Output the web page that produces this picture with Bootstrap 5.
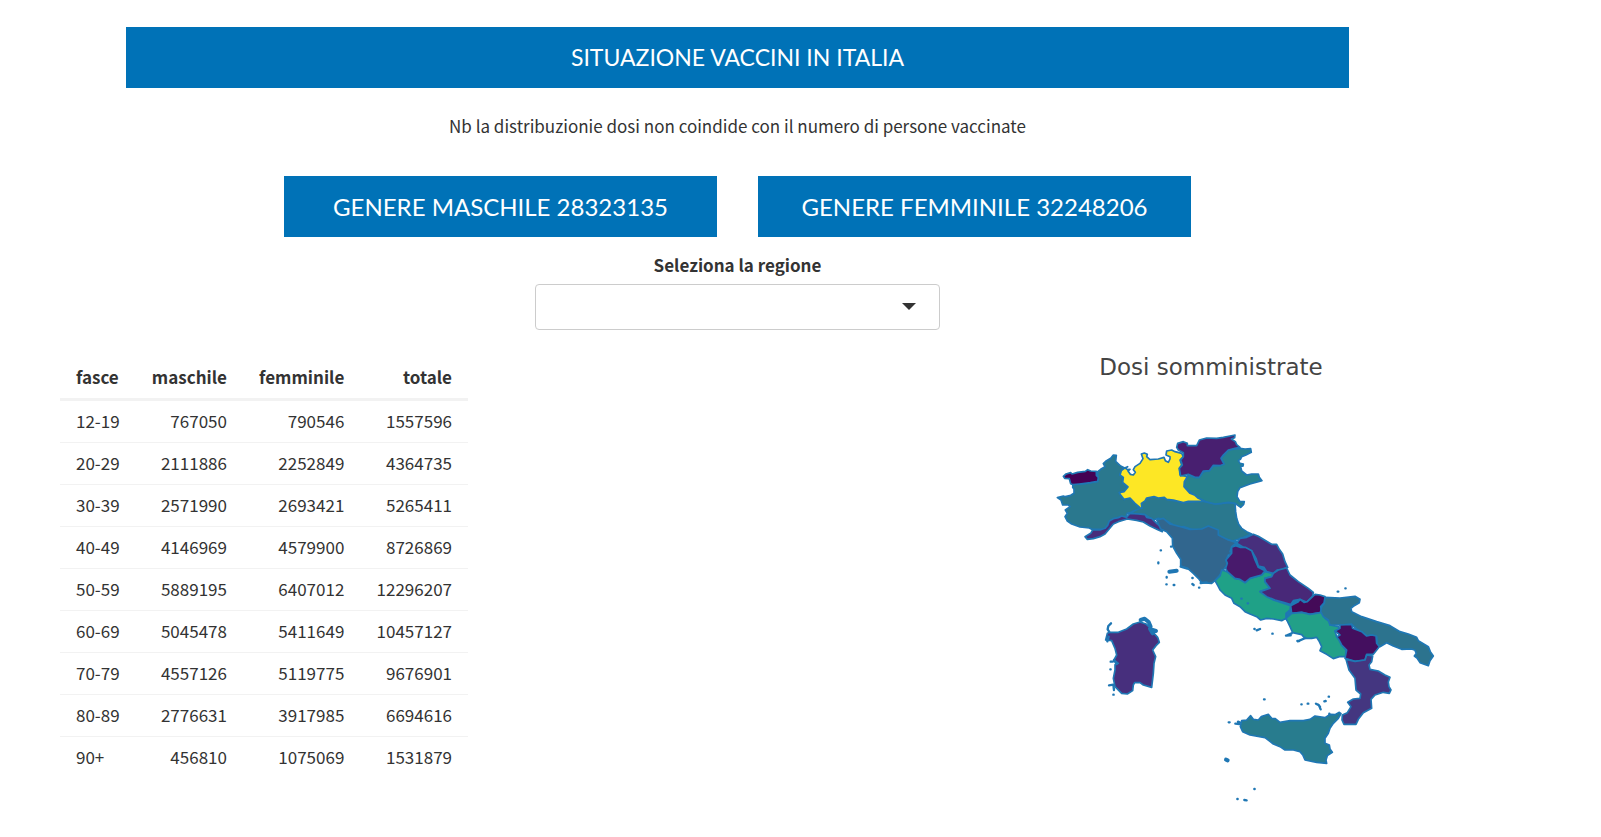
<!DOCTYPE html>
<html lang="it">
<head>
<meta charset="utf-8">
<meta name="viewport" content="width=device-width, initial-scale=1">
<title>Situazione vaccini in Italia</title>
<link href="https://cdn.jsdelivr.net/npm/bootstrap@5.3.0/dist/css/bootstrap.min.css" rel="stylesheet">
<style>
  body { font-family: "Noto Sans CJK SC", "Open Sans", sans-serif; font-size: 17px; line-height: 24px; color: #333; background: #fff; }
  .page-wrap { padding: 27px 126px 24px 0; }
  .top-area { padding: 0 126px; }
  .banner { background: #0072b7; color: #fff; font-family: Lato, sans-serif; font-size: 23px; line-height: 29px; padding: 16px; margin: 0; font-weight: 400; text-align: center; }
  .banner-count { font-size: 24px; flex: 0 1 433px; }
  .note { margin: 26px 0 38px; }
  .counts { gap: 41px; }
  .region-label { font-weight: 700; margin: 16px 0 7px; }
  .region-select { width: 405px; max-width: 100%; height: 46px; border: 1px solid #ccc; border-radius: 4px; color: #333;
    background-image: url("data:image/svg+xml,%3Csvg xmlns='http://www.w3.org/2000/svg' viewBox='0 0 14 7'%3E%3Cpath d='M0 0h14L7 7z' fill='%23333'/%3E%3C/svg%3E");
    background-size: 14px 7px; background-position: right 23px top 18px; }
  .lower { padding: 20px 25px 0 60px; }
  .ages { width: 408px; margin: 0; color: #333; white-space: nowrap; --bs-table-color: #333; }
  .ages th, .ages td { padding: 8px 16px 9px; border-bottom: 1px solid #f2f2f2; text-align: right; line-height: 24px; }
  .ages th:first-child, .ages td:first-child { text-align: left; }
  .ages thead th { border-bottom: 3px solid #f2f2f2; padding: 15px 16px 9px; }
  .ages tbody tr:last-child td { border-bottom: 0; }
  .map-box { flex: 0 1 478px; }
  .map-title { font-family: "DejaVu Sans", sans-serif; font-size: 23px; line-height: 28px; color: #444; margin: 3px 0 44px; text-align: center; }
  .regions path { stroke: #1f77b4; stroke-width: 5; stroke-linejoin: round; }
  .regions .isles path { fill: none; stroke-width: 7; stroke-linecap: round; }
  .regions .isles .wide { stroke-width: 12; }
</style>
</head>
<body>
<main class="page-wrap">
  <div class="top-area text-center">
    <h1 class="banner">SITUAZIONE VACCINI IN ITALIA</h1>
    <p class="note">Nb la distribuzionie dosi non coindide con il numero di persone vaccinate</p>
    <div class="counts d-flex justify-content-center">
      <h2 class="banner banner-count">GENERE MASCHILE 28323135</h2>
      <h2 class="banner banner-count">GENERE FEMMINILE 32248206</h2>
    </div>
    <label class="region-label d-block" for="regione">Seleziona la regione</label>
    <select class="form-select region-select mx-auto" id="regione"><option value=""></option></select>
  </div>
  <div class="lower d-flex justify-content-between align-items-start">
    <table class="table ages">
      <thead><tr><th>fasce</th><th>maschile</th><th>femminile</th><th>totale</th></tr></thead>
      <tbody>
        <tr><td>12-19</td><td>767050</td><td>790546</td><td>1557596</td></tr>
        <tr><td>20-29</td><td>2111886</td><td>2252849</td><td>4364735</td></tr>
        <tr><td>30-39</td><td>2571990</td><td>2693421</td><td>5265411</td></tr>
        <tr><td>40-49</td><td>4146969</td><td>4579900</td><td>8726869</td></tr>
        <tr><td>50-59</td><td>5889195</td><td>6407012</td><td>12296207</td></tr>
        <tr><td>60-69</td><td>5045478</td><td>5411649</td><td>10457127</td></tr>
        <tr><td>70-79</td><td>4557126</td><td>5119775</td><td>9676901</td></tr>
        <tr><td>80-89</td><td>2776631</td><td>3917985</td><td>6694616</td></tr>
        <tr><td>90+</td><td>456810</td><td>1075069</td><td>1531879</td></tr>
      </tbody>
    </table>
    <section class="map-box">
      <h2 class="map-title">Dosi somministrate</h2>
      <svg class="d-block w-100 regions" viewBox="-234 255 1434 1150" role="img" aria-label="Mappa delle regioni">
        <!-- Fondo dei confini interni -->
        <path fill="#1f77b4" d="M545 605 605 605 700 680 770 790 815 785 850 900 722 850 560 700Z"/>
        <!-- Nord -->
        <g>
          <path fill="#2a788e" d="M143 395 152 388 165 380 160 371 167 364 182 355 190 345 199 346 197 364 212 378 224 384 214 392 210 405 220 412 218 427 234 441 222 455 208 458 212 465 222 478 240 474 255 490 270 508 250 516 232 520 226 535 210 530 190 540 170 567 152 568 125 568 118 564 90 561 65 552 52 543 45 530 52 520 46 510 60 500 55 495 38 495 33 480 22 473 40 468 46 470 62 466 72 460 72 448 68 442 69 433 105 430 143 424Z"/>
          <path fill="#440154" d="M40 409 48 402 62 398 66 402 83 397 106 394 113 389 122 393 139 394 139 406 145 412 143 424 121 428 105 430 88 432 69 434 62 431 58 416 44 415Z"/>
          <path fill="#2a788e" d="M270 505 250 514 240 520 265 522 285 524 310 540 325 535 350 543 370 555 385 565 400 560 430 570 455 568 480 560 500 572 500 582 520 595 548 603 575 595 605 582 590 575 575 565 566 553 560 535 557 515 555 490 535 487 515 490 495 492 463 484 440 484 400 488 385 484 350 478 343 472 312 470 290 474 274 490Z"/>
          <path fill="#472d7b" d="M105 590 112 598 130 596 150 590 165 582 175 570 190 552 205 545 222 540 232 537 260 541 280 546 300 558 325 570 337 575 335 563 320 550 305 535 290 532 285 524 265 522 240 520 230 532 215 528 205 533 190 536 178 543 173 556 165 565 150 570 128 570 122 580Z"/>
          <path fill="#26828e" d="M570 325 585 327 602 326 604 337 588 345 575 350 572 357 565 362 570 370 580 372 579 378 572 380 575 393 590 405 605 402 625 402 628 412 636 422 600 432 570 443 563 455 561 470 570 485 583 485 581 493 572 502 555 490 535 487 515 490 495 492 463 484 435 468 402 440 403 425 415 405 435 412 448 412 460 395 478 392 490 378 522 372 513 355 535 330Z"/>
          <path fill="#fde725" d="M224 384 214 392 210 405 220 412 218 427 234 441 222 455 208 458 212 465 222 478 240 474 255 490 270 503 276 505 274 490 285 483 290 474 312 470 325 474 343 472 350 478 370 480 385 484 400 488 415 484 440 484 463 483 445 475 435 466 420 460 402 440 403 425 412 410 390 405 388 385 395 375 390 360 400 350 395 340 375 335 365 330 350 333 348 345 360 350 360 357 355 367 346 362 342 352 325 357 300 359 290 350 292 343 283 339 274 342 279 356 270 370 255 380 250 389 256 397 250 405 241 403 234 393 240 388 232 389 226 384 233 380Z"/>
          <path fill="#481f70" d="M380 322 383 310 400 305 412 310 412 317 440 317 448 300 470 294 500 295 520 292 540 288 555 285 554 293 544 297 556 305 560 314 570 322 555 325 535 330 520 345 513 355 522 372 510 377 490 376 478 392 460 393 448 412 435 412 415 403 392 408 388 385 397 375 392 360 400 350 400 338 385 330Z"/>
        </g>
        <!-- Centro -->
        <g transform="translate(270 510)">
          <path fill="#31668e" d="M50 30 70 25 90 42 130 52 150 58 185 57 205 48 235 60 235 75 265 90 290 98 275 110 270 125 280 128 265 135 258 150 262 165 250 180 240 195 225 212 215 220 185 218 175 205 160 190 143 175 122 168 122 148 110 130 98 108 97 85 80 65 62 57Z"/>
          <path fill="#1fa187" d="M225 212 240 198 245 180 262 185 285 205 300 208 315 218 330 205 365 195 375 185 398 190 395 200 375 205 375 215 390 235 360 245 380 258 400 270 430 280 452 287 450 300 438 310 438 325 425 332 400 327 380 325 362 330 350 320 330 312 315 305 300 290 282 280 275 265 255 255 240 240 235 230Z"/>
          <path fill="#472f7d" d="M290 100 300 85 320 82 340 73 355 79 370 88 395 103 410 103 418 118 428 132 435 155 443 172 425 178 412 180 400 190 380 185 372 172 355 168 348 145 335 122 310 112Z"/>
          <path fill="#481a6c" d="M275 112 287 107 300 112 316 112 335 122 345 150 355 172 375 182 365 195 340 202 330 205 315 218 300 208 285 205 262 185 257 175 262 160 258 150 275 130Z"/>
        </g>
        <!-- Sud -->
        <g transform="translate(660 660)">
          <path fill="#482878" d="M50 24 60 45 85 65 115 85 130 97 128 108 110 127 90 118 70 122 62 134 40 127 15 120-10 110-30 95 0 85-15 65-15 55 5 50 10 40 25 30Z"/>
          <path fill="#440a58" d="M62 137 85 125 90 118 102 127 112 125 135 103 150 105 165 110 163 128 152 140 155 157 120 163 95 157 65 160Z"/>
          <path fill="#22a088" d="M48 175 65 160 95 157 120 163 155 157 165 175 178 185 180 195 205 200 208 208 195 213 200 230 208 238 215 255 228 270 228 290 208 290 190 296 170 283 150 272 155 260 147 243 140 232 125 235 105 235 95 224 68 218 60 200Z"/>
          <path fill="#2c738e" d="M165 112 210 114 255 109 270 118 268 128 250 139 243 145 245 155 275 170 320 185 360 197 390 215 415 222 440 232 445 242 475 260 481 275 490 288 480 302 475 317 450 308 441 294 433 288 439 280 435 271 425 267 395 268 370 258 350 248 330 260 322 255 320 230 305 225 290 228 275 215 260 208 245 193 210 195 180 195 175 180 160 170 152 155 155 140 163 130Z"/>
          <path fill="#440f5f" d="M195 213 210 205 210 195 245 193 248 205 275 215 290 228 305 225 318 228 320 250 328 260 310 283 290 283 285 300 255 304 225 295 230 270 215 255 207 240 200 230 210 225Z"/>
          <path fill="#443680" d="M228 298 255 304 285 300 290 285 308 288 305 305 297 315 300 328 325 333 345 345 360 352 355 366 357 380 363 390 358 400 340 397 315 405 303 418 305 445 280 458 265 478 258 493 222 493 216 480 217 465 232 458 243 440 233 427 250 417 270 415 272 402 258 390 255 355 237 330Z"/>
        </g>
        <!-- Sicilia -->
        <g transform="translate(450 1020)">
          <path fill="#287c8e" d="M125 122 140 120 152 107 160 118 175 120 184 110 205 103 215 115 226 116 240 127 270 122 310 122 330 118 345 108 375 113 390 103 405 104 418 97 423 101 415 115 400 130 390 145 385 160 375 175 375 190 388 195 390 207 397 217 382 227 378 240 380 250 350 247 315 240 309 226 300 215 280 210 255 210 240 200 220 192 195 173 150 165 128 155 121 140Z"/>
        </g>
        <!-- Sardegna -->
        <g transform="translate(120 780)">
          <path fill="#472f7d" d="M60 97 85 97 110 87 130 72 150 66 168 72 182 84 190 98 203 112 208 127 198 137 188 150 197 170 192 190 190 220 185 262 160 255 150 248 134 248 130 255 128 272 112 282 95 280 75 260 70 235 75 210 75 194 85 190 72 180 80 165 75 145 65 122 47 120 52 100Z"/>
        </g>
        <g class="isles">
          <path d="M183 850 175 858 173 868 178 876M176 890 172 904M192 960 200 972M177 1036 190 1034 192 1050M190 1064h1M181 988h1M182 965h6"/>
          <path class="wide" d="M272 840 284 836 296 846 302 860M308 870 318 873M300 866 308 880"/>
          <path d="M332 631h1M325 667v3M363 620h1M350 711v2M349 733h1M371 735h2M427 714h1M427 732 431 735M447 743h1M452 729 470 727M392 680 412 686M574 776h1M593 790h1"/>
          <path class="wide" d="M358 695 380 692"/>
          <path d="M613 867h1M620 871 630 867M667 881h1M708 887 722 886M742 903 748 903M743 904 766 894M711 886 725 880M863 755h2M886 745h1"/>
          <path d="M642 1078h2M754 1093h1M773 1091h2M798 1091 807 1096 812 1108M805 1094 810 1100M823 1084 827 1083M836 1070h1M838 1121v3M536 1147h3M556 1151 568 1152M564 1145 570 1148"/>
          <path class="wide" d="M528 1259 533 1261"/>
          <path d="M613 1347h1M562 1377h1M583 1380 590 1381"/>
        </g>
      </svg>
    </section>
  </div>
</main>
<script src="https://cdn.jsdelivr.net/npm/bootstrap@5.3.0/dist/js/bootstrap.bundle.min.js"></script>
</body>
</html>
